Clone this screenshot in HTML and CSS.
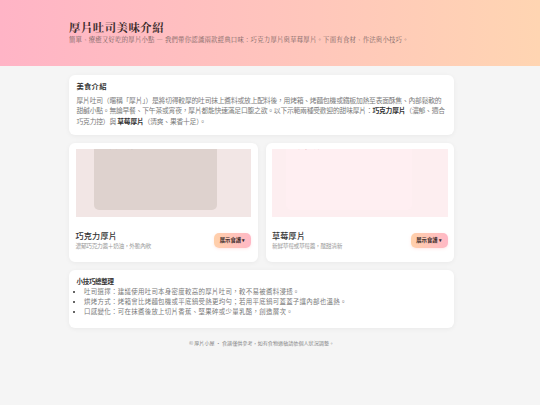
FILE: index.html
```html
<!DOCTYPE html>
<html lang="zh-Hant">
<head>
<meta charset="utf-8">
<title>厚片吐司美味介紹</title>
<link rel="stylesheet" href="styles.css">
</head>
<body>
<div class="page">
<header class="hero">
  <div class="wrap">
    <h1 class="hero-title">厚片吐司美味介紹</h1>
    <p class="hero-sub">簡單、療癒又好吃的厚片小點 — 我們帶你認識兩款經典口味：巧克力厚片與草莓厚片。下面有食材、作法與小技巧。</p>
  </div>
</header>
<main class="wrap main">
  <section class="card intro">
    <h2 class="card-heading">美食介紹</h2>
    <p class="intro-text">厚片吐司（暱稱「厚片」）是將切得較厚的吐司抹上醬料或放上配料後，用烤箱、烤麵包機或鐵板加熱至表面酥焦、內部鬆軟的甜鹹小點。無論早餐、下午茶或宵夜，厚片都能快速滿足口腹之欲。以下示範兩種受歡迎的甜味厚片：<strong>巧克力厚片</strong>（濃郁、適合巧克力控）與 <strong>草莓厚片</strong>（清爽、果香十足）。</p>
  </section>
  <section class="products">
    <article class="card product">
      <div class="thumb thumb-choc">
        <div class="thumb-inner thumb-inner-choc">巧克力厚片</div>
      </div>
      <div class="product-info">
        <div class="product-text">
          <h3 class="product-title">巧克力厚片</h3>
          <p class="product-desc">濃郁巧克力醬＋奶油，外脆內軟</p>
        </div>
        <button class="recipe-btn">展示食譜 ▾</button>
      </div>
    </article>
    <article class="card product">
      <div class="thumb thumb-straw">
        <div class="thumb-inner thumb-inner-straw">草莓厚片</div>
      </div>
      <div class="product-info">
        <div class="product-text">
          <h3 class="product-title">草莓厚片</h3>
          <p class="product-desc">新鮮草莓或草莓醬，酸甜清新</p>
        </div>
        <button class="recipe-btn">展示食譜 ▾</button>
      </div>
    </article>
  </section>
  <section class="card tips">
    <h2 class="card-heading tips-heading">小技巧總整理</h2>
    <ul class="tips-list">
      <li>吐司選擇：建議使用吐司本身密度較高的厚片吐司，較不易被醬料浸透。</li>
      <li>烘烤方式：烤箱會比烤麵包機或平底鍋受熱更均勻；若用平底鍋可蓋蓋子讓內部也溫熱。</li>
      <li>口感變化：可在抹醬後放上切片香蕉、堅果碎或少量乳酪，創造層次。</li>
    </ul>
  </section>
  <footer class="footer">© 厚片小屋 · 食譜僅供參考，如有食物過敏請依個人狀況調整。</footer>
</main>
</div>
</body>
</html>
```

FILE: styles.css
```css
* { box-sizing: border-box; }
html, body { margin: 0; padding: 0; }
body {
  background: #f5f5f5;
  color: #333;
  font-family: "Noto Sans CJK TC", "Noto Sans", sans-serif;
}
.page {
  width: 523px;
}
.wrap {
  width: 385px;
  margin: 0 auto;
}
.hero {
  width: 540px;
  height: 66px;
  background: linear-gradient(90deg, #ffb4c6 0%, #ffc4bd 50%, #ffd5b2 100%);
  padding: 20px 0 0 69px;
}
.hero .wrap {
  margin: 0;
}
.hero-title {
  margin: 0;
  font-family: "Noto Serif CJK TC", "Noto Serif TC", "AR PL UMing TW", "Liberation Serif", serif;
  font-size: 11.4px;
  letter-spacing: 0.5px;
  line-height: 14px;
  font-weight: 700;
  color: #3a2b2b;
}
.hero-sub {
  margin: 0;
  font-family: "Noto Serif CJK TC", "Noto Serif TC", "AR PL UMing TW", "Liberation Serif", serif;
  font-size: 6.4px;
  letter-spacing: 0.2px;
  line-height: 11px;
  color: #7b6464;
  white-space: nowrap;
}
.main {
  padding-top: 9px;
}
.card {
  background: #fff;
  border-radius: 6px;
  box-shadow: 0 1px 5px rgba(0, 0, 0, 0.05);
}
.intro {
  padding: 7px 7.5px 8.5px;
}
.card-heading {
  margin: 0 0 4.6px;
  font-size: 7.3px;
  letter-spacing: 0.25px;
  line-height: 8px;
  font-weight: 700;
  color: #333;
}
.intro-text {
  margin: 0;
  font-size: 6.8px;
  letter-spacing: -0.22px;
  line-height: 10.7px;
  color: #7a7a7a;
}
.intro-text strong {
  color: #333;
}
.products {
  display: grid;
  grid-template-columns: 1fr 1fr;
  gap: 8px;
  margin-top: 8px;
}
.product {
  padding: 6px 6.5px 6px;
}
.thumb {
  height: 68px;
  overflow: hidden;
}
.thumb-choc { background: #f2e6e5; }
.thumb-straw { background: #fdeef0; }
.thumb-inner {
  height: 80px;
  margin-top: -19px;
  padding: 12px 0 0 10px;
  font-size: 6px;
  line-height: 8px;
  border-radius: 0 0 5px 5px;
}
.thumb-inner-choc {
  margin-left: 18px;
  width: 123px;
  background: #ded2ce;
  color: #7a6a66;
}
.thumb-inner-straw {
  margin-left: 14px;
  width: 126px;
  background: #ffeff2;
  color: #c0606a;
}
.product-info {
  display: flex;
  align-items: center;
  justify-content: space-between;
  padding: 13px 0 6px;
}
.product-title {
  margin: 0;
  font-size: 8.1px;
  letter-spacing: 0.2px;
  line-height: 11px;
  font-weight: 500;
  color: #333;
}
.product-desc {
  margin: 0;
  font-size: 5.7px;
  letter-spacing: -0.3px;
  line-height: 9px;
  color: #999;
}
.recipe-btn {
  border: 0;
  width: 37px;
  height: 15px;
  padding: 0;
  border-radius: 5px;
  background: linear-gradient(90deg, #ffd0aa, #ffb8c6);
  font-family: inherit;
  font-size: 5.3px;
  font-weight: 700;
  color: #3a2b2b;
  box-shadow: 0 1px 3px rgba(255, 160, 160, 0.25);
}
.tips {
  margin-top: 8px;
  padding: 7px 7.5px 11px;
}
.tips-heading {
  font-size: 6.5px;
  letter-spacing: -0.3px;
  margin-bottom: 2px;
}
.tips-list {
  margin: 0;
  padding-left: 7.5px;
  font-size: 6.45px;
  letter-spacing: 0.3px;
  line-height: 10px;
  color: #7a7a7a;
}
.tips-list li::marker {
  color: #333;
}
.footer {
  margin-top: 11px;
  text-align: center;
  font-size: 5.1px;
  line-height: 8px;
  color: #888;
}
```
